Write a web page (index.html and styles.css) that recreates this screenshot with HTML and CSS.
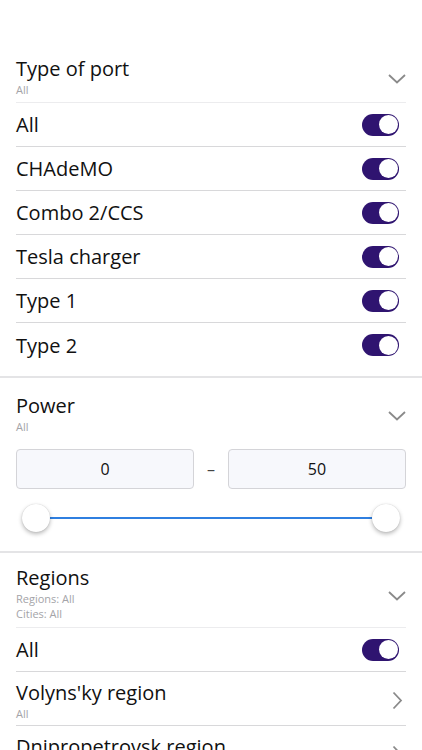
FILE: index.html
```html
<!DOCTYPE html>
<html>
<head>
<meta charset="utf-8">
<link rel="stylesheet" href="styles.css">
</head>
<body>
<div class="page">
  <section class="group">
    <div class="head">
      <div class="head-text">
        <div class="title">Type of port</div>
        <div class="sub">All</div>
      </div>
      <svg class="chev-down" width="18" height="10" viewBox="0 0 18 10"><path d="M1 1 L9 8.5 L17 1" fill="none" stroke="#8a8a8a" stroke-width="1.8"/></svg>
    </div>
    <div class="row"><span class="label">All</span><span class="toggle"></span></div>
    <div class="row"><span class="label">CHAdeMO</span><span class="toggle"></span></div>
    <div class="row"><span class="label">Combo 2/CCS</span><span class="toggle"></span></div>
    <div class="row"><span class="label">Tesla charger</span><span class="toggle"></span></div>
    <div class="row"><span class="label">Type 1</span><span class="toggle"></span></div>
    <div class="row last"><span class="label">Type 2</span><span class="toggle"></span></div>
  </section>
  <section class="group">
    <div class="head plain">
      <div class="head-text">
        <div class="title">Power</div>
        <div class="sub">All</div>
      </div>
      <svg class="chev-down" width="18" height="10" viewBox="0 0 18 10"><path d="M1 1 L9 8.5 L17 1" fill="none" stroke="#8a8a8a" stroke-width="1.8"/></svg>
    </div>
    <div class="range">
      <div class="box">0</div>
      <div class="dash">–</div>
      <div class="box">50</div>
    </div>
    <div class="slider">
      <div class="track"></div>
      <span class="thumb left"></span>
      <span class="thumb right"></span>
    </div>
  </section>
  <section class="group">
    <div class="head regions">
      <div class="head-text">
        <div class="title">Regions</div>
        <div class="sub">Regions: All</div>
        <div class="sub">Cities: All</div>
      </div>
      <svg class="chev-down" width="18" height="10" viewBox="0 0 18 10"><path d="M1 1 L9 8.5 L17 1" fill="none" stroke="#8a8a8a" stroke-width="1.8"/></svg>
    </div>
    <div class="row"><span class="label">All</span><span class="toggle"></span></div>
    <div class="row sub-row">
      <div class="head-text">
        <div class="label">Volyns'ky region</div>
        <div class="sub">All</div>
      </div>
      <svg class="chev-right" width="11" height="19" viewBox="0 0 11 19"><path d="M1.5 1.5 L9 9.5 L1.5 17.5" fill="none" stroke="#8a8a8a" stroke-width="1.8"/></svg>
    </div>
    <div class="row sub-row">
      <div class="head-text">
        <div class="label">Dnipropetrovsk region</div>
        <div class="sub">All</div>
      </div>
      <svg class="chev-right" width="11" height="19" viewBox="0 0 11 19"><path d="M1.5 1.5 L9 9.5 L1.5 17.5" fill="none" stroke="#8a8a8a" stroke-width="1.8"/></svg>
    </div>
  </section>
</div>
</body>
</html>
```
FILE: styles.css
```css
html, body {
  margin: 0;
  padding: 0;
  background: #ffffff;
  font-family: "Open Sans", "Lato", sans-serif;
  color: #111111;
}
.page {
  padding-top: 43px;
  height: 707px;
  overflow: hidden;
}
.group {
  border-bottom: 2px solid #e4e4e6;
}
.head {
  margin: 0 16px;
  height: 60px;
  display: flex;
  align-items: center;
  justify-content: space-between;
  border-bottom: 1px solid #ececee;
  box-sizing: border-box;
  padding-top: 8px;
  padding-bottom: 2px;
}
.head.plain {
  border-bottom: none;
  height: 61px;
  padding-top: 10px;
  padding-bottom: 1px;
}
.head-text {
  display: flex;
  flex-direction: column;
}
.title {
  font-size: 20px;
  line-height: 27px;
}
.sub {
  font-size: 11px;
  line-height: 15px;
  color: #a4a4a8;
}
.chev-down {
  margin-top: 6px;
}
.row {
  margin: 0 16px;
  height: 44px;
  display: flex;
  align-items: center;
  justify-content: space-between;
  border-bottom: 1px solid #d8d8da;
  box-sizing: border-box;
}
.row.last {
  border-bottom: none;
  margin-bottom: 9px;
}
.label {
  font-size: 20px;
  line-height: 27px;
}
.toggle {
  width: 37px;
  height: 22px;
  border-radius: 11px;
  background: #2f1470;
  position: relative;
  margin-right: 7px;
}
.toggle::after {
  content: "";
  position: absolute;
  right: 1.5px;
  top: 1.5px;
  width: 19px;
  height: 19px;
  border-radius: 50%;
  background: #ffffff;
}
.range {
  margin: 0 16px;
  padding-top: 10px;
  display: flex;
  align-items: center;
}
.box {
  flex: 1;
  height: 40px;
  box-sizing: border-box;
  border: 1px solid #d4d4d8;
  border-radius: 4px;
  background: #f7f8fc;
  display: flex;
  align-items: center;
  justify-content: center;
  font-size: 16px;
}
.dash {
  width: 34px;
  text-align: center;
  font-size: 16px;
  color: #444;
}
.slider {
  position: relative;
  margin: 14px 22px 18px 22px;
  height: 30px;
}
.track {
  position: absolute;
  left: 14px;
  right: 14px;
  top: 14px;
  height: 2px;
  background: #2f7fe0;
}
.thumb {
  position: absolute;
  top: 1px;
  width: 28px;
  height: 28px;
  border-radius: 50%;
  background: #ffffff;
  box-shadow: 0 2px 4px rgba(0,0,0,0.28), 0 0 1px rgba(0,0,0,0.2);
}
.thumb.left { left: 0; }
.thumb.right { right: 0; }
.head.regions {
  height: 75px;
  padding-top: 5px;
  padding-bottom: 0;
}
.sub-row {
  height: 54px;
  padding-top: 2px;
}
.chev-right {
  margin-right: 3px;
  margin-top: 2px;
}
```
